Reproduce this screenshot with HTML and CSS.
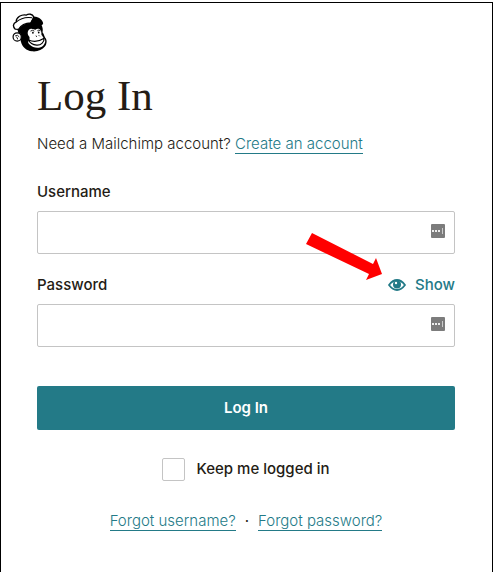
FILE: index.html
```html
<!DOCTYPE html>
<html lang="en">
<head>
  <meta charset="UTF-8">
  <meta name="viewport" content="width=device-width, initial-scale=1">
  <title>Log In</title>
  <link rel="stylesheet" href="styles.css">
</head>
<body>
  <div class="page">
    <header class="header">
      <svg class="logo" viewBox="12 14 102 114" role="img" aria-label="Mailchimp">
        <path d="M27 60 C38 48 54 40 70 42 L96 46 C101 53 103 61 101 70 C106 76 106 82 109 86 C115 92 114 104 108 112 C100 122 86 128 70 126 C54 124 42 114 38 98 Z" fill="#000"/>
        <path d="M63 84 C54 76 57 61 68 60 C74 60 77 63 80 63 C85 58 93 59 96 65 C98 69 98 74 98 78 C102 81 102 85 105 88 C111 92 110 102 104 108 C94 119 74 117 64 107 C58 102 57 96 63 92 Z" fill="#fff"/>
        <path d="M60 93 C74 99 92 97 106 88 C106 100 96 109 84 108 C73 107 64 102 60 93 Z" fill="#fff" stroke="#000" stroke-width="3.5" stroke-linejoin="round"/>
        <path d="M66 67 Q72 62 77 67 M86 66 Q90 62 95 66 M82 80 L84 84 M90 79 L93 82" fill="none" stroke="#000" stroke-width="2.5"/>
        <ellipse cx="73" cy="72" rx="2.5" ry="3"/>
        <ellipse cx="90" cy="71" rx="2.5" ry="3"/>
        <path d="M21 61 C14 54 14 45 24 40 C24 26 40 17 54 20 C61 15 71 17 76 26 L67 43 C53 43 38 50 31 62 Z" fill="#fff" stroke="#000" stroke-width="4" stroke-linejoin="round"/>
        <path d="M24 41 C36 30 53 25 71 28" fill="none" stroke="#000" stroke-width="3"/>
        <path d="M75 25 C88 24 100 31 103 44 C101 51 94 52 86 48 C79 45 73 43 65 44 Z" fill="#000"/>
        <circle cx="27" cy="84" r="12" fill="#fff" stroke="#000" stroke-width="3.5"/>
        <path d="M21 81 Q29 76 33 84 M24 84 Q29 85 28 91" fill="none" stroke="#000" stroke-width="2.5"/>
      </svg>
    </header>

    <main class="content">
      <h1 class="title">Log In</h1>
      <p class="intro">Need a Mailchimp account? <a class="link" href="#">Create an account</a></p>

      <form class="login-form">
        <div class="field">
          <div class="field-head">
            <label for="username">Username</label>
          </div>
          <div class="field-box">
            <input type="text" id="username" name="username">
            <svg class="manager-icon" viewBox="0 0 14 14" aria-hidden="true">
              <rect width="14" height="14" rx="1" fill="#7c7c7c"/>
              <path d="M1 6h2v2H1zM4 6h2v2H4zM7 6h2v2H7z" fill="#eee"/>
              <path d="M11 4h1v6h-1z" fill="#ccc"/>
            </svg>
          </div>
        </div>

        <div class="field">
          <div class="field-head">
            <label for="password">Password</label>
            <button type="button" class="show-btn">
              <svg class="eye" viewBox="0 0 18 12" aria-hidden="true">
                <path d="M1 6 C4 2 6 1 9 1 S14 2 17 6 C14 10 12 11 9 11 S4 10 1 6 Z" fill="#fff" stroke="#237a87" stroke-width="1.8" stroke-linejoin="round"/>
                <circle cx="9" cy="5.5" r="4" fill="#237a87"/>
                <circle cx="8" cy="4" r="1.2" fill="#fff"/>
              </svg>
              Show
            </button>
            <svg class="pointer" viewBox="0 0 76 48" aria-hidden="true">
              <path d="M6 1 L67 32 L70 26 L76 42 L60 48 L63 42 L0 12 Z" fill="#f00"/>
            </svg>
          </div>
          <div class="field-box">
            <input type="password" id="password" name="password">
            <svg class="manager-icon" viewBox="0 0 14 14" aria-hidden="true">
              <rect width="14" height="14" rx="1" fill="#7c7c7c"/>
              <path d="M1 6h2v2H1zM4 6h2v2H4zM7 6h2v2H7z" fill="#eee"/>
              <path d="M11 4h1v6h-1z" fill="#ccc"/>
            </svg>
          </div>
        </div>

        <button type="submit" class="login-btn">Log In</button>

        <div class="remember">
          <input type="checkbox" id="remember" name="remember">
          <label for="remember">Keep me logged in</label>
        </div>
      </form>

      <div class="help-links">
        <a class="link" href="#">Forgot username?</a>
        <span>·</span>
        <a class="link" href="#">Forgot password?</a>
      </div>
    </main>
  </div>
</body>
</html>
```

FILE: styles.css
```css
* {
  box-sizing: border-box;
}
body {
  margin: 0;
  padding-top: 2px;
  background: #fff;
  color: #241c15;
  font-family: Inter, "Liberation Sans", sans-serif;
  font-size: 15px;
  line-height: 24px;
}
.page {
  min-height: calc(100vh - 2px);
  border: 1px solid #000;
  border-bottom: none;
}
.header {
  padding: 10px 11px 0;
}
.logo {
  display: block;
  width: 35px;
  height: 39px;
}
.content {
  padding: 20px 37px 0 36px;
}
.title {
  margin: 0;
  font-family: "Liberation Serif", serif;
  font-size: 43px;
  font-weight: 400;
  line-height: 48px;
}
.intro {
  margin: 12px 0 24px;
  font-weight: 300;
}
.link {
  border-bottom: 1px solid #237a87;
  color: #237a87;
  font-weight: 300;
  line-height: 18px;
  text-decoration: none;
}
.field {
  margin-bottom: 19px;
}
.field-head {
  position: relative;
  display: flex;
  justify-content: space-between;
  align-items: center;
  margin-bottom: 7px;
  font-weight: 500;
}
.field-box {
  position: relative;
}
.field-box input {
  display: block;
  width: 100%;
  height: 43px;
  padding: 0 36px 0 12px;
  border: 1px solid #c4c4c4;
  border-radius: 2px;
  background: #fff;
  font: inherit;
}
.field-box input:focus {
  outline: none;
  border-color: #237a87;
}
.manager-icon {
  position: absolute;
  top: 13px;
  right: 10px;
  width: 14px;
  height: 14px;
}
.show-btn {
  display: flex;
  align-items: center;
  gap: 9px;
  padding: 0;
  border: none;
  background: none;
  color: #237a87;
  font: inherit;
  cursor: pointer;
}
.eye {
  width: 18px;
  height: 12px;
}
/* arrow lies over the field above and points at the show button */
.pointer {
  position: absolute;
  right: 73px;
  bottom: 17px;
  width: 76px;
  height: 48px;
  pointer-events: none;
}
.login-btn {
  display: block;
  width: 100%;
  height: 44px;
  margin-top: 39px;
  border: none;
  border-radius: 2px;
  background: #237a87;
  color: #fff;
  font: inherit;
  font-weight: 600;
  cursor: pointer;
}
.remember {
  display: flex;
  justify-content: center;
  align-items: center;
  gap: 11px;
  margin-top: 27px;
  font-weight: 500;
}
.remember input {
  appearance: none;
  width: 23px;
  height: 23px;
  margin: 0;
  border: 1px solid #c4c4c4;
  border-radius: 2px;
  background: #fff;
}
.remember input:checked {
  background: #237a87;
}
.help-links {
  display: flex;
  justify-content: center;
  align-items: center;
  gap: 9px;
  margin-top: 28px;
}
```
